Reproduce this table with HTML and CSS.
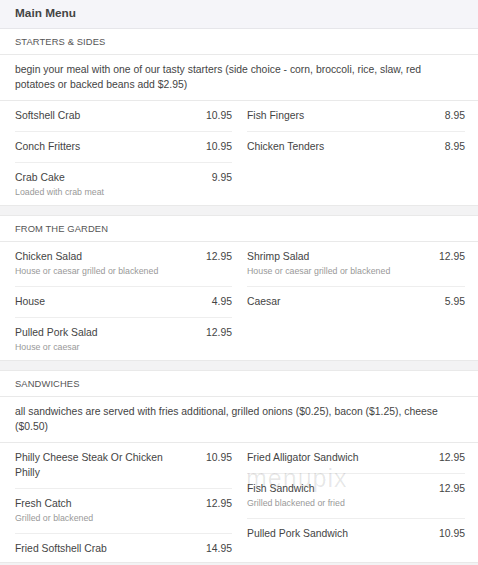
FILE: index.html
```
<!DOCTYPE html>
<html>
<head>
<meta charset="utf-8">
<link rel="stylesheet" href="styles.css">
</head>
<body>
<div class="page">
  <div class="topbar">Main Menu</div>

  <section class="sect first">
    <div class="sect-title">STARTERS &amp; SIDES</div>
    <div class="sect-desc">begin your meal with one of our tasty starters (side choice - corn, broccoli, rice, slaw, red potatoes or backed beans add $2.95)</div>
    <div class="cols">
      <div class="col">
        <div class="item"><div class="row"><span class="name">Softshell Crab</span><span class="price">10.95</span></div></div>
        <div class="item"><div class="row"><span class="name">Conch Fritters</span><span class="price">10.95</span></div></div>
        <div class="item"><div class="row"><span class="name">Crab Cake</span><span class="price">9.95</span></div><div class="sub">Loaded with crab meat</div></div>
      </div>
      <div class="col">
        <div class="item"><div class="row"><span class="name">Fish Fingers</span><span class="price">8.95</span></div></div>
        <div class="item"><div class="row"><span class="name">Chicken Tenders</span><span class="price">8.95</span></div></div>
      </div>
    </div>
  </section>

  <section class="sect">
    <div class="sect-title">FROM THE GARDEN</div>
    <div class="cols">
      <div class="col">
        <div class="item"><div class="row"><span class="name">Chicken Salad</span><span class="price">12.95</span></div><div class="sub">House or caesar grilled or blackened</div></div>
        <div class="item"><div class="row"><span class="name">House</span><span class="price">4.95</span></div></div>
        <div class="item"><div class="row"><span class="name">Pulled Pork Salad</span><span class="price">12.95</span></div><div class="sub">House or caesar</div></div>
      </div>
      <div class="col">
        <div class="item"><div class="row"><span class="name">Shrimp Salad</span><span class="price">12.95</span></div><div class="sub">House or caesar grilled or blackened</div></div>
        <div class="item"><div class="row"><span class="name">Caesar</span><span class="price">5.95</span></div></div>
      </div>
    </div>
  </section>

  <section class="sect">
    <div class="sect-title">SANDWICHES</div>
    <div class="sect-desc">all sandwiches are served with fries additional, grilled onions ($0.25), bacon ($1.25), cheese ($0.50)</div>
    <div class="cols">
      <div class="col">
        <div class="item"><div class="row"><span class="name">Philly Cheese Steak Or Chicken Philly</span><span class="price">10.95</span></div></div>
        <div class="item"><div class="row"><span class="name">Fresh Catch</span><span class="price">12.95</span></div><div class="sub">Grilled or blackened</div></div>
        <div class="item"><div class="row"><span class="name">Fried Softshell Crab</span><span class="price">14.95</span></div></div>
      </div>
      <div class="col">
        <div class="item"><div class="row"><span class="name">Fried Alligator Sandwich</span><span class="price">12.95</span></div></div>
        <div class="item"><div class="row"><span class="name">Fish Sandwich</span><span class="price">12.95</span></div><div class="sub">Grilled blackened or fried</div></div>
        <div class="item"><div class="row"><span class="name">Pulled Pork Sandwich</span><span class="price">10.95</span></div></div>
      </div>
    </div>
    <div class="watermark">menupix</div>
  </section>
</div>
</body>
</html>
```
FILE: styles.css
```
html, body {
  margin: 0;
  padding: 0;
  background: #f3f3f4;
}
body {
  font-family: "Liberation Sans", Arial, sans-serif;
  color: #444;
  font-size: 10.4px;
  line-height: 15px;
}
.page {
  width: 478px;
}
.topbar {
  background: #f5f5f9;
  height: 28px;
  line-height: 27px;
  padding-left: 15px;
  font-weight: bold;
  font-size: 11.8px;
  color: #444;
  border-bottom: 1px solid #e6e6ea;
}
.sect {
  background: #fff;
  margin-top: 9px;
  border-top: 1px solid #e9e9e9;
  border-bottom: 1px solid #e9e9e9;
  position: relative;
}
.sect.first {
  margin-top: 0;
  border-top: none;
}
.sect-title {
  font-size: 9.4px;
  color: #555;
  padding: 5px 15px 5px;
  border-bottom: 1px solid #e9e9e9;
  letter-spacing: 0.1px;
}
.sect-desc {
  padding: 7px 15px 8px;
  border-bottom: 1px solid #e9e9e9;
  color: #444;
}
.cols {
  display: grid;
  grid-template-columns: 217px 218px;
  column-gap: 15px;
  padding-left: 15px;
  padding-right: 13px;
}
.col {
  display: flex;
  flex-direction: column;
}
.item {
  padding: 7px 0 8px;
  border-bottom: 1px solid #eeeeee;
}
.item:last-child {
  border-bottom: none;
  padding-bottom: 6px;
}
.row {
  display: flex;
  justify-content: space-between;
  gap: 16px;
}
.name {
  color: #444;
}
.price {
  color: #444;
  white-space: nowrap;
}
.sub {
  font-size: 8.8px;
  line-height: 14px;
  color: #999;
}
.watermark {
  position: absolute;
  left: 246px;
  top: 94px;
  font-size: 25px;
  line-height: 26px;
  letter-spacing: 1px;
  color: rgba(0, 0, 0, 0.09);
  pointer-events: none;
}
```
